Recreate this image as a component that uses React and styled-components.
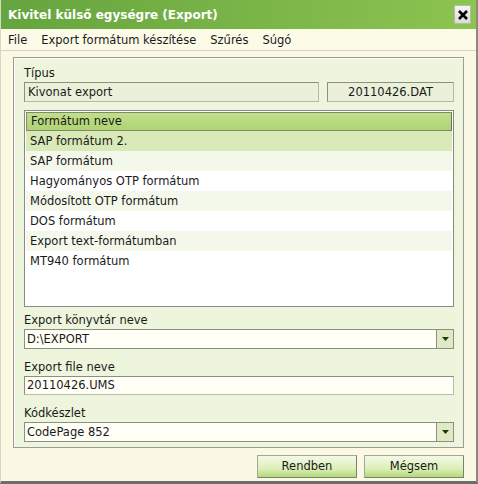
import React from "react";
import styled, { createGlobalStyle } from "styled-components";

const GlobalStyle = createGlobalStyle`
  html, body {
    margin: 0;
    padding: 0;
    background: #ffffff;
  }
  body {
    font-family: "DejaVu Sans", Verdana, sans-serif;
    font-size: 11.5px;
    color: #1a1a1a;
  }
`;

const formats = [
  "SAP formátum 2.",
  "SAP formátum",
  "Hagyományos OTP formátum",
  "Módosított OTP formátum",
  "DOS formátum",
  "Export text-formátumban",
  "MT940 formátum",
];

function ArrowIcon() {
  return (
    <svg width="7" height="4" viewBox="0 0 7 4">
      <path d="M0 0 L7 0 L3.5 4 Z" fill="#1a3a10" />
    </svg>
  );
}

function CloseIcon() {
  return (
    <svg width="10" height="10" viewBox="0 0 10 10">
      <path d="M1 1 L9 9 M9 1 L1 9" stroke="#000" strokeWidth="2.6" />
    </svg>
  );
}

function Combo({ value }) {
  return (
    <ComboBox>
      <ComboText>{value}</ComboText>
      <DropButton>
        <ArrowIcon />
      </DropButton>
    </ComboBox>
  );
}

export default function App() {
  return (
    <>
      <GlobalStyle />
      <Window>
        <TitleBar>
          <Title>Kivitel külső egységre (Export)</Title>
          <CloseButton>
            <CloseIcon />
          </CloseButton>
        </TitleBar>
        <MenuBar>
          <MenuItem>File</MenuItem>
          <MenuItem>Export formátum készítése</MenuItem>
          <MenuItem>Szűrés</MenuItem>
          <MenuItem>Súgó</MenuItem>
        </MenuBar>
        <Body>
          <Group>
            <Label>Típus</Label>
            <TypeRow>
              <ReadOnlyField>Kivonat export</ReadOnlyField>
              <ReadOnlyField $center $width="127px">
                20110426.DAT
              </ReadOnlyField>
            </TypeRow>
            <ListBox>
              <ListHeader>Formátum neve</ListHeader>
              {formats.map((name, i) => (
                <ListRow key={name} $selected={i === 0} $alt={i % 2 === 1}>
                  {name}
                </ListRow>
              ))}
            </ListBox>
            <Label $top="6px">Export könyvtár neve</Label>
            <Combo value="D:\EXPORT" />
            <Label $top="11px">Export file neve</Label>
            <TextField $width="430px">20110426.UMS</TextField>
            <Label $top="11px">Kódkészlet</Label>
            <Combo value="CodePage 852" />
          </Group>
          <ButtonRow>
            <Button>Rendben</Button>
            <Button>Mégsem</Button>
          </ButtonRow>
        </Body>
      </Window>
    </>
  );
}

const Window = styled.div`
  width: 478px;
  height: 484px;
  box-sizing: border-box;
  display: flex;
  flex-direction: column;
  background: #fbf8e4;
  border-right: 2px solid #8a8a80;
  border-bottom: 3px solid #6e6e66;
  border-left: 1px solid #d8d6c4;
  overflow: hidden;
`;

const TitleBar = styled.div`
  height: 29px;
  flex: none;
  display: flex;
  align-items: center;
  justify-content: space-between;
  padding: 0 5px 0 7px;
  background: linear-gradient(to right, #65a43e, #8dc451);
`;

const Title = styled.div`
  color: #ffffff;
  font-weight: bold;
  font-size: 12px;
`;

const CloseButton = styled.div`
  width: 17px;
  height: 19px;
  display: flex;
  align-items: center;
  justify-content: center;
  background: linear-gradient(#f4f4f0, #dcdcd6);
  border: 1px solid #b8b8b0;
  box-sizing: border-box;
`;

const MenuBar = styled.div`
  height: 21px;
  flex: none;
  display: flex;
  align-items: center;
  background: #fbfbe8;
  border-bottom: 1px solid #d4d4c0;
`;

const MenuItem = styled.div`
  padding: 0 7px;
`;

const Body = styled.div`
  flex: 1;
  display: flex;
  flex-direction: column;
  padding: 6px 12px 0 12px;
`;

const Group = styled.div`
  height: 391px;
  box-sizing: border-box;
  display: flex;
  flex-direction: column;
  padding: 8px 9px 0 10px;
  background: #eef5dd;
  border: 1px solid #9c9c94;
  box-shadow: inset 1px 1px 0 #ffffff;
`;

const Label = styled.div`
  margin-top: ${(p) => p.$top || "0"};
  height: 16px;
  line-height: 14px;
`;

const TypeRow = styled.div`
  display: flex;
  gap: 8px;
`;

const ReadOnlyField = styled.div`
  flex: ${(p) => (p.$width ? "none" : "1")};
  width: ${(p) => p.$width || "auto"};
  height: 20px;
  box-sizing: border-box;
  line-height: 18px;
  padding: 0 3px;
  text-align: ${(p) => (p.$center ? "center" : "left")};
  background: #eaf1d8;
  border: 1px solid #b4b8a8;
  border-top-color: #8c9084;
  border-left-color: #8c9084;
`;

const ListBox = styled.div`
  margin-top: 8px;
  height: 197px;
  box-sizing: border-box;
  background: #ffffff;
  border: 1px solid #8a8a84;
  padding: 1px 1px 0 1px;
`;

const ListHeader = styled.div`
  height: 19px;
  box-sizing: border-box;
  line-height: 17px;
  padding-left: 4px;
  background: linear-gradient(#c2de8c, #afd472);
  border: 1px solid #7e8a6c;
  border-right-color: #6c7460;
`;

const ListRow = styled.div`
  height: 20px;
  line-height: 20px;
  padding-left: 4px;
  background: ${(p) =>
    p.$selected ? "#d9e9b7" : p.$alt ? "#f3f8ea" : "#ffffff"};
`;

const ComboBox = styled.div`
  height: 20px;
  box-sizing: border-box;
  display: flex;
  align-items: stretch;
  background: #fffff6;
  border: 1px solid #8c9084;
  border-right: none;
`;

const ComboText = styled.div`
  flex: 1;
  line-height: 18px;
  padding-left: 2px;
`;

const DropButton = styled.div`
  width: 16px;
  display: flex;
  align-items: center;
  justify-content: center;
  background: #dfeac4;
  border: 1px solid #8c9084;
  margin: -1px 0;
`;

const TextField = styled.div`
  width: ${(p) => p.$width};
  height: 19px;
  box-sizing: border-box;
  line-height: 17px;
  padding-left: 2px;
  background: #fffff6;
  border: 1px solid #b8bca8;
  border-top-color: #8c9084;
  border-left-color: #8c9084;
`;

const ButtonRow = styled.div`
  display: flex;
  justify-content: flex-end;
  gap: 7px;
  margin-top: 7px;
`;

const Button = styled.div`
  width: 100px;
  height: 23px;
  box-sizing: border-box;
  text-align: center;
  line-height: 21px;
  background: linear-gradient(#f4f9e8, #dcefb8 60%, #b4d97a);
  border: 1px solid #a0a896;
  border-right-color: #7a8270;
  border-bottom-color: #7a8270;
`;
